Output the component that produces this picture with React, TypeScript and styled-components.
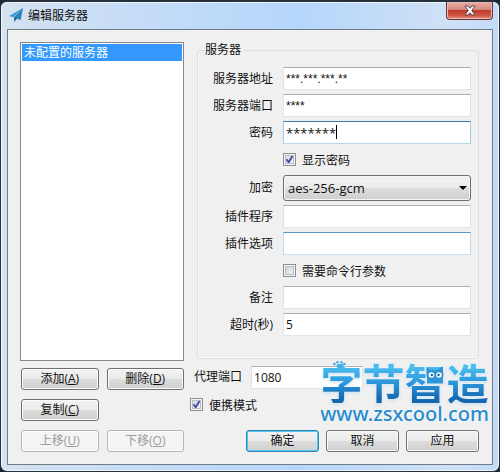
import React from "react";
import styled, { createGlobalStyle } from "styled-components";

const Global = createGlobalStyle`
  * { box-sizing: border-box; }
  body { margin: 0; background: #1c2733; }
  body, button, input, select {
    font-family: "Open Sans", "Noto Sans CJK SC", sans-serif;
    font-size: 12px;
    color: #111;
  }
`;

const Frame = styled.main`
  position: relative;
  display: flex;
  flex-direction: column;
  min-height: 100vh;
  padding: 0 6px 6px;
  border: 1px solid #27313d;
  border-top-width: 2px;
  border-radius: 7px;
  background: linear-gradient(90deg, #d5e2f0, #c4dcf8 30%, #b5d6fb 60%, #cfe1f6 90%, #c3dafa);
  box-shadow: inset 0 0 0 1px #eef6fd;
`;

const TitleBar = styled.header`
  display: flex;
  align-items: flex-start;
  height: 27px;
  padding-left: 2px;
`;

const PlaneIcon = styled.svg`
  width: 14px;
  height: 14px;
  margin-top: 6px;
`;

const Title = styled.h1`
  flex: 1;
  margin: 4px 0 0 5px;
  font-size: 12px;
  font-weight: 400;
  line-height: 19px;
`;

const CloseButton = styled.button`
  display: flex;
  align-items: center;
  justify-content: center;
  width: 47px;
  height: 18px;
  padding: 0;
  border: 1px solid #6b3437;
  border-top: 0;
  border-radius: 0 0 4px 4px;
  background: linear-gradient(#e7aea6, #d5887d 45%, #bf3c2c 50%, #cf5946 80%, #e19682);
  box-shadow: inset 0 0 0 1px #eab9b0;
`;

const Client = styled.form`
  flex: 1;
  display: grid;
  grid-template-columns: 164px minmax(0, 1fr);
  grid-template-rows: 1fr auto;
  column-gap: 6px;
  row-gap: 5px;
  padding: 12px 13px 12px 12px;
  border: 1px solid #6f7b87;
  background: #f0f0f0;
`;

const ServerList = styled.ul`
  margin: 0;
  padding: 1px;
  border: 1px solid #828790;
  background: #fff;
  list-style: none;
`;

const ServerItem = styled.li`
  padding-left: 2px;
  background: #3399ff;
  color: #fff;
  line-height: 17px;
`;

const Group = styled.fieldset`
  min-width: 0;
  margin: 0 0 2px 7px;
  padding: 9px 7px 20px;
  border: 1px solid #dedfe1;
  border-radius: 3px;
  box-shadow: inset 1px -1px #fafafa;
`;

const Legend = styled.legend`
  padding: 0 3px 0 0;
  line-height: 16px;
`;

const Fields = styled.div`
  display: grid;
  grid-template-columns: 68px minmax(0, 1fr);
  gap: 4px 10px;
  align-items: center;
`;

const Label = styled.label`
  line-height: 22px;
  text-align: right;
  white-space: nowrap;
`;

const Input = styled.input<{ $tone?: "focus" | "hover"; $masked?: boolean }>`
  width: 100%;
  height: 23px;
  padding: 0 2px;
  border: 1px solid #e2e3ea;
  border-top-color: #abadb3;
  background: #fff;
  outline: 0;
  ${(p) => p.$masked && 'font-family: "Liberation Sans", sans-serif;'}
  ${(p) => p.$tone === "hover" && "border-color: #5794bf #c5daed #c7e2f1;"}
  ${(p) => p.$tone === "focus" && "border-color: #3d7bad #a4c9e3 #b7d9ed; font-size: 13px;"}
`;

const PasswordBox = styled.div`
  position: relative;
`;

const Caret = styled.span`
  position: absolute;
  top: 4px;
  left: 53px;
  width: 1px;
  height: 14px;
  background: #000;
`;

const Picker = styled.div`
  position: relative;
`;

const Select = styled.select`
  display: block;
  width: 100%;
  height: 26px;
  padding: 0 4px;
  border: 1px solid #707070;
  border-radius: 3px;
  appearance: none;
  background: linear-gradient(#f2f2f2, #ebebeb 50%, #dddddd 50%, #cfcfcf);
  box-shadow: inset 0 0 0 1px #f7f7f7;
  font-size: 13px;
`;

const Arrow = styled.svg`
  position: absolute;
  top: 11px;
  right: 4px;
  width: 8px;
  height: 4px;
  pointer-events: none;
`;

const Check = styled.label<{ $inField?: boolean }>`
  display: flex;
  align-items: center;
  gap: 6px;
  height: 23px;
  ${(p) => p.$inField && "grid-column: 2;"}
`;

const Tick = styled.input`
  appearance: none;
  width: 13px;
  height: 13px;
  margin: 0;
  border: 1px solid #8e8f8f;
  background: linear-gradient(135deg, #cbcfd5, #f6f6f6);
  box-shadow: inset 0 0 0 1px #f4f4f4, inset 0 0 0 2px #b9bdc4;
  &:checked {
    background: url("data:image/svg+xml,%3Csvg xmlns='http://www.w3.org/2000/svg' viewBox='0 0 11 11'%3E%3Cpath d='M2.5 5.2 4.7 8.3 8.6 1.8' fill='none' stroke='%23434ba4' stroke-width='1.9'/%3E%3C/svg%3E"),
      linear-gradient(135deg, #d4d8df, #f6f6f6);
  }
`;

const Button = styled.button<{ $primary?: boolean }>`
  height: 22px;
  padding: 0;
  border: 1px solid #707070;
  border-radius: 3px;
  background: linear-gradient(#f2f2f2, #ebebeb 50%, #dddddd 50%, #cfcfcf);
  box-shadow: inset 0 0 0 1px #fcfcfc;
  line-height: 20px;
  white-space: nowrap;
  ${(p) => p.$primary && "border-color: #3c7fb1; box-shadow: inset 0 0 0 1px #48cdf0;"}
  &:disabled {
    border-color: #b5b5b5;
    background: #f4f4f4;
    color: #9b9b9b;
  }
`;

const ListButtons = styled.div`
  display: grid;
  grid-template-columns: 1fr 1fr;
  align-content: start;
  gap: 9px 8px;
  padding: 2px 0 0 1px;
`;

const CopyCell = styled.div`
  display: grid;
  grid-column: 1 / -1;
  grid-template-columns: 1fr 1fr;
  gap: 8px;
`;

const Options = styled.div`
  display: flex;
  flex-direction: column;
`;

const PortRow = styled.div`
  display: grid;
  grid-template-columns: auto 112px;
  justify-content: start;
  gap: 9px;
  margin-bottom: 4px;
  padding-left: 4px;
`;

const Actions = styled.div`
  display: grid;
  grid-template-columns: repeat(3, 73px);
  justify-content: end;
  gap: 7px;
  margin-top: auto;
`;

const Watermark = styled.div`
  position: absolute;
  right: 10px;
  bottom: 46px;
  text-align: center;
  pointer-events: none;
`;

const Brand = styled.div`
  background: linear-gradient(#4bbcee 15%, #2d98dc 50%, #1668b0 90%);
  background-clip: text;
  color: transparent;
  font-family: "Noto Sans CJK SC", sans-serif;
  font-size: 42px;
  font-weight: 700;
  line-height: 42px;
  filter: drop-shadow(0 0 1px #fff) drop-shadow(0 1px 1px #bcd9ee);
`;

const Site = styled.div`
  color: #288bd0;
  font-family: "Noto Sans", sans-serif;
  font-size: 20px;
  font-weight: 500;
  line-height: 22px;
  text-shadow: 0 0 2px #fff;
`;

const Critters = styled.svg`
  position: absolute;
  top: 0;
  left: 0;
  width: 100%;
  height: 42px;
`;

type FieldProps = {
  id: string;
  label: string;
  value?: string;
  tone?: "focus" | "hover";
  masked?: boolean;
};

function Field({ id, label, value = "", tone, masked }: FieldProps) {
  return (
    <>
      <Label htmlFor={id}>{label}</Label>
      <Input id={id} defaultValue={value} $tone={tone} $masked={masked} />
    </>
  );
}

type KeyButtonProps = { text: string; hotkey: string; disabled?: boolean };

function KeyButton({ text, hotkey, disabled }: KeyButtonProps) {
  return (
    <Button type="button" disabled={disabled}>
      {text}(<u>{hotkey}</u>)
    </Button>
  );
}

export default function App() {
  return (
    <>
      <Global />
      <Frame>
        <TitleBar>
          <PlaneIcon viewBox="0 0 14 14" aria-hidden="true">
            <path d="M0 8 14 0 4.5 9.2Z" fill="#3b9fcf" />
            <path d="M14 0 5 9.5 5.4 14 7.6 10.9Z" fill="#1c6c9c" />
            <path d="M14 0 6.2 9.6 11.6 12.2Z" fill="#2684b8" />
          </PlaneIcon>
          <Title>编辑服务器</Title>
          <CloseButton type="button" aria-label="关闭">
            <svg width="12" height="11" viewBox="0 0 12 11" aria-hidden="true">
              <path
                d="M1 1H4.2L6 3.3 7.8 1H11L7.8 5.5 11 10H7.8L6 7.7 4.2 10H1L4.2 5.5Z"
                fill="#fff"
                stroke="#564650"
              />
            </svg>
          </CloseButton>
        </TitleBar>
        <Client onSubmit={(e: React.FormEvent) => e.preventDefault()}>
          <ServerList>
            <ServerItem>未配置的服务器</ServerItem>
          </ServerList>
          <Group>
            <Legend>服务器</Legend>
            <Fields>
              <Field id="address" label="服务器地址" value="***.***.***.**" masked />
              <Field id="port" label="服务器端口" value="****" masked />
              <Label htmlFor="password">密码</Label>
              <PasswordBox>
                <Input id="password" defaultValue="*******" $tone="focus" />
                <Caret />
              </PasswordBox>
              <Check $inField>
                <Tick type="checkbox" defaultChecked />
                显示密码
              </Check>
              <Label htmlFor="cipher">加密</Label>
              <Picker>
                <Select id="cipher" defaultValue="aes-256-gcm">
                  <option>aes-256-gcm</option>
                </Select>
                <Arrow viewBox="0 0 8 4" aria-hidden="true">
                  <path d="M0 0H8L4 4Z" fill="#000" />
                </Arrow>
              </Picker>
              <Field id="plugin" label="插件程序" />
              <Field id="plugin-options" label="插件选项" tone="hover" />
              <Check $inField>
                <Tick type="checkbox" />
                需要命令行参数
              </Check>
              <Field id="remark" label="备注" />
              <Field id="timeout" label="超时(秒)" value="5" />
            </Fields>
          </Group>
          <ListButtons>
            <KeyButton text="添加" hotkey="A" />
            <KeyButton text="删除" hotkey="D" />
            <CopyCell>
              <KeyButton text="复制" hotkey="C" />
            </CopyCell>
            <KeyButton text="上移" hotkey="U" disabled />
            <KeyButton text="下移" hotkey="O" disabled />
          </ListButtons>
          <Options>
            <PortRow>
              <Label htmlFor="proxy-port">代理端口</Label>
              <Input id="proxy-port" defaultValue="1080" />
            </PortRow>
            <Check>
              <Tick type="checkbox" defaultChecked />
              便携模式
            </Check>
            <Actions>
              <Button type="submit" $primary>
                确定
              </Button>
              <Button type="button">取消</Button>
              <Button type="button">应用</Button>
            </Actions>
          </Options>
        </Client>
        <Watermark>
          <Brand>字节智造</Brand>
          <Site>www.zsxcool.com</Site>
          <Critters viewBox="0 0 168 42" preserveAspectRatio="xMidYMid meet" aria-hidden="true">
            <g fill="#43aee6">
              <circle cx="14" cy="3" r="1.3" />
              <circle cx="17" cy="1.3" r="1.3" />
              <circle cx="21" cy="1.3" r="1.3" />
              <circle cx="24" cy="3" r="1.3" />
              <ellipse cx="19" cy="5" rx="3" ry="2" />
            </g>
            <path
              d="M106 6 110 9H117L122 5 123 14Q122 21 114.5 21 107 21 106 14Z"
              fill="#2b93d6"
            />
            <circle cx="111" cy="14" r="2.8" fill="#fff" />
            <circle cx="118.5" cy="14" r="2.8" fill="#fff" />
            <circle cx="111.4" cy="14" r="1.2" fill="#1763a5" />
            <circle cx="118.1" cy="14" r="1.2" fill="#1763a5" />
          </Critters>
        </Watermark>
      </Frame>
    </>
  );
}
